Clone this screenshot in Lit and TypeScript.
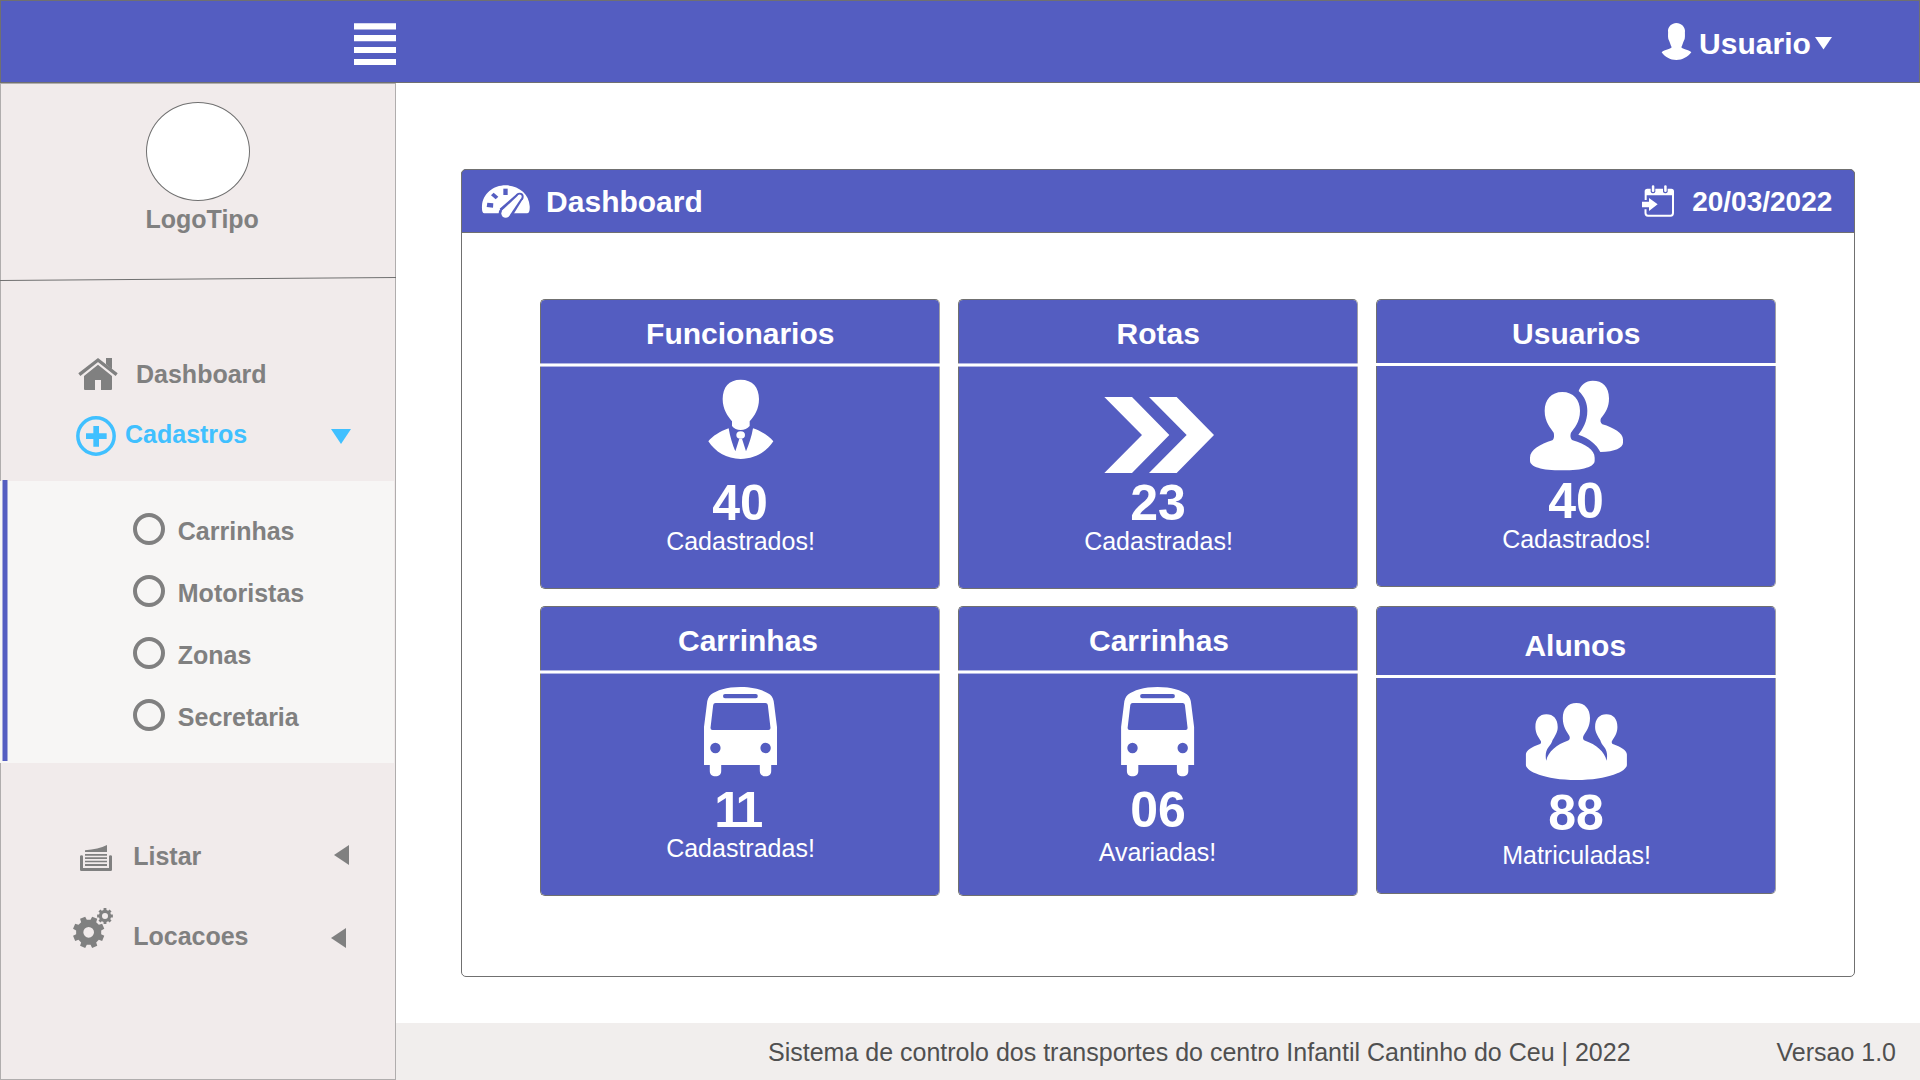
import { LitElement, html, css, svg, type TemplateResult, type SVGTemplateResult } from "lit";
import { customElement, property } from "lit/decorators.js";

/** Outline of a toothed wheel; `phase` is the angle of the first tooth in degrees. */
function gearPath(cx: number, cy: number, outer: number, root: number, hole: number, phase: number): string {
  const teeth = 8;
  const pt = (r: number, deg: number) => {
    const a = (deg * Math.PI) / 180;
    return `${(cx + r * Math.cos(a)).toFixed(2)} ${(cy + r * Math.sin(a)).toFixed(2)}`;
  };
  const parts: string[] = [];
  for (let i = 0; i < teeth; i++) {
    const a = phase + (i * 360) / teeth;
    parts.push(pt(root, a - 14), pt(outer, a - 10), pt(outer, a + 10), pt(root, a + 14));
  }
  return (
    `M${parts.join("L")}Z` +
    `M${cx - hole} ${cy}a${hole} ${hole} 0 1 0 ${hole * 2} 0a${hole} ${hole} 0 1 0 ${-hole * 2} 0Z`
  );
}

const userIcon = html`<svg class="i-user" viewBox="123 66 93 117">
  <path d="M169 69C184 70 194 79 195 92C194 99 196 108 194 117C190 124 188 134 184 142C188 148 205 148 214 157C203 171 188 180 169 180C150 180 135 171 125 157C134 148 151 148 155 142C151 134 149 124 145 117C143 108 145 99 144 92C145 79 155 70 169 69Z"/>
</svg>`;

const homeIcon = html`<svg class="i-home" viewBox="231 81 126 102">
  <path d="M318 84H336V118L318 103Z"/>
  <path d="M238 134L294 90L350 134" fill="none" stroke="currentColor" stroke-width="10"/>
  <path d="M294 104L336 138V177Q336 180 333 180H303V150H285V180H255Q252 180 252 177V138Z"/>
</svg>`;

const plusIcon = html`<svg class="i-plus" viewBox="228 258 120 120">
  <circle cx="288" cy="318" r="54.5" fill="none" stroke="currentColor" stroke-width="10.5"/>
  <path d="M280 288H297V310H320V327H297V350H280V327H258V310H280Z"/>
</svg>`;

const listIcon = html`<svg class="i-list" viewBox="237 132 102 84">
  <path d="M255 151Q295 148 321 135V156H255Z"/>
  <path d="M255 162H321V167H255ZM255 172H321V177H255ZM255 182H321V187H255ZM255 192H321V198H255Z"/>
  <path d="M240 169Q240 166 245 166Q249 166 249 169V204H327V169Q327 166 331 166Q336 166 336 169V209Q336 213 332 213H244Q240 213 240 209Z"/>
</svg>`;

const gearsIcon = html`<svg class="i-gears" viewBox="216 321 126 126">
  <path fill-rule="evenodd" d=${gearPath(266, 397, 48, 38, 16, 22.5)}/>
  <path fill-rule="evenodd" d=${gearPath(315, 348, 24, 18.5, 9, 0)}/>
</svg>`;

const gaugeIcon = html`<svg class="i-gauge" viewBox="93 102 150 105">
  <path d="M103 190C98 190 95 182 96 168C98 131 130 106 167 106C205 106 237 131 239 168C240 182 237 190 231 190Z"/>
  <g class="cut">
    <path d="M160 116H173V135H160Z"/>
    <path d="M123 136L131 128L145 140L137 148Z"/>
    <path d="M112 158L130 160L129 173L110 171Z"/>
    <path d="M199.8 132.300L218.2 147.700L184 203.5L149 176Z"/>
    <circle cx="209" cy="140" r="12"/><circle cx="167" cy="190" r="21"/>
  </g>
  <path d="M204 136.500L213.800 144.100L178 197L156 181.500Z"/>
  <circle cx="209" cy="140" r="6.200"/><circle cx="167" cy="190" r="13"/>
</svg>`;

const calendarIcon = html`<svg class="i-cal" viewBox="123 102 102 102">
  <path d="M134 150V124Q134 116 142 116H214Q222 116 222 124V136H140V150Z"/>
  <path d="M136.500 178V189Q136.500 197 144 197H212Q219 197 219 189V128" fill="none" stroke="currentColor" stroke-width="6"/>
  <g class="cut"><rect x="152" y="104" width="14" height="26" rx="6"/><rect x="189" y="104" width="14" height="26" rx="6"/></g>
  <rect x="155.500" y="106" width="7.500" height="20" rx="3.500"/><rect x="192.500" y="106" width="7.500" height="20" rx="3.500"/>
  <path d="M126 155H147V144L173 163L147 183V172H126Z"/>
</svg>`;

const triDown = html`<svg class="tri-down" viewBox="0 0 20 15" preserveAspectRatio="none"><path d="M0 0H20L10 15Z"/></svg>`;
const triLeft = html`<svg class="tri-left" viewBox="0 0 15 20" preserveAspectRatio="none"><path d="M15 0V20L0 10Z"/></svg>`;

const busShape = svg`<path fill-rule="evenodd" d="M0 0C14 0 24 3.500 29.500 7.500C32 9.500 33.300 13 33.600 17L36.500 40V78H30.700V84C30.700 87.500 28.500 89.300 25 89.300C21.500 89.300 19.300 87.500 19.300 84V78H-19.300V84C-19.300 87.500 -21.500 89.300 -25 89.300C-28.500 89.300 -30.700 87.500 -30.700 84V78H-36.500V40L-33.600 17C-33.300 13 -32 9.500 -29.500 7.500C-24 3.500 -14 0 0 0ZM-15.500 7Q-17.500 7 -17.500 9Q-17.500 11.200 -15.500 11.200H15.300Q17.300 11.200 17.300 9Q17.300 7 15.300 7ZM-25 16Q-27 16 -27.300 18L-30 41Q-30 43 -28 43H28Q30 43 30 41L27.300 18Q27 16 25 16ZM-30.300 61a5.200 5.200 0 1 0 10.400 0a5.200 5.200 0 1 0 -10.400 0ZM19.900 61a5.200 5.200 0 1 0 10.400 0a5.200 5.200 0 1 0 -10.400 0Z"/>`;

interface Stat {
  kind: string;
  title: string;
  value: string;
  label: string;
  viewBox: string;
  art: SVGTemplateResult;
}

const stats: Stat[] = [
  {
    kind: "staff", title: "Funcionarios", value: "40", label: "Cadastrados!", viewBox: "450 231 360 333",
    art: svg`<path d="M632 269C668 269 687 292 687 327C687 358 673 378 659 394V408C652 416 643 420 632 420C621 420 612 416 606 408V394C593 378 578 358 578 327C578 292 596 269 632 269Z"/>
      <path d="M596 415C570 424 548 438 535 454C555 485 590 507 632 507C675 507 710 485 730 454C717 438 695 424 669 415C665 440 656 465 648 484L636 446H628L616 484C608 465 600 440 596 415Z"/>
      <ellipse cx="632" cy="435" rx="13" ry="11.500"/>`,
  },
  {
    kind: "routes", title: "Rotas", value: "23", label: "Cadastradas!", viewBox: "444 231 360 333",
    art: svg`<path d="M463 321H546L658 435L546 549H463L576 435ZM597 321H680L792 435L680 549H597L710 435Z"/>`,
  },
  {
    kind: "users", title: "Usuarios", value: "40", label: "Cadastrados!", viewBox: "468 228 360 330",
    art: svg`<path d="M607 306C640 306 660 330 660 362C660 398 642 414 633 428C630 436 631 447 638 451C677 463 704 480 704 503V512C704 530 670 541 607 541C544 541 510 530 510 512V503C510 480 540 463 577 451C583 447 583 436 581 428C573 414 554 398 554 362C554 330 574 306 607 306Z"/>
      <path d="M656 303C675 322 682 340 682 362C682 395 668 417 655 434C690 446 710 464 721 486C765 485 789 473 789 458V448C789 430 762 413 727 403C721 399 720 391 723 385C738 366 747 352 747 325C747 290 728 272 698 272C677 272 662 285 656 303Z"/>`,
  },
  {
    kind: "vans", title: "Carrinhas", value: "11", label: "Cadastradas!", viewBox: "-60.5 -13 120 111", art: busShape,
  },
  {
    kind: "broken", title: "Carrinhas", value: "06", label: "Avariadas!", viewBox: "-59.600 -13 120 111", art: busShape,
  },
  {
    kind: "pupils", title: "Alunos", value: "88", label: "Matriculadas!", viewBox: "-60.400 -25 120 110",
    art: svg`<path d="M0 0C8.500 0 13.600 6 13.600 15C13.600 24 9.500 28.500 7 33C6.200 35 6.800 37 8.200 37.500C20 41.500 28 48.500 30.200 57.700C31.200 53 30.800 47.500 27.800 44C25.800 41.500 24.700 40 23.800 37C20 31 18.700 28 18.700 24C18.700 16 23 11.300 30 11.300C37 11.300 41 16 41 24C41 30.500 38 34 35.600 38C35 39.500 35.500 41 37 41.300C44 43.500 50.500 47.500 50.500 51.500V62C50.500 68 32 77 0 77C-32 77 -50.500 68 -50.500 62V51.500C-50.500 47.500 -44 43.500 -37 41.300C-35.500 41 -35 39.500 -35.600 38C-38 34 -41 30.500 -41 24C-41 16 -37 11.300 -30 11.300C-23 11.300 -18.700 16 -18.700 24C-18.700 28 -20 31 -23.800 37C-24.700 40 -25.800 41.500 -27.800 44C-30.800 47.500 -31.200 53 -30.200 57.700C-28 48.500 -20 41.500 -8.200 37.500C-6.800 37 -6.200 35 -7 33C-9.500 28.500 -13.600 24 -13.600 15C-13.600 6 -8.500 0 0 0Z"/>`,
  },
];

const entries = ["Carrinhas", "Motoristas", "Zonas", "Secretaria"];

@customElement("stat-card")
class StatCard extends LitElement {
  @property({ attribute: false }) stat!: Stat;

  static styles = css`
    :host { display: block; }
    .card {
      box-sizing: border-box; width: 400px; height: 290px; border: 1px solid #707070; border-radius: 5px;
      border-right-color: #a0a0a6;
      background: #545dc1; background-clip: padding-box; color: #fff; display: flex; flex-direction: column;
      align-items: center; white-space: nowrap;
    }
    .title {
      height: 63px; padding: 17px 0 0 0.500px; box-sizing: border-box; font-size: 30px; line-height: 33px; font-weight: 700;
    }
    .rule {
      align-self: stretch; flex: none; height: 4px; margin: 0 -1px;
      background: linear-gradient(rgba(255,255,255,.55) 0 1px, #fff 1px 3px, rgba(255,255,255,.55) 3px);
    }
    .glyph { display: block; flex: none; width: 120px; height: 111px; fill: #fff; }
    .value { font-size: 50px; line-height: 50px; font-weight: 700; }
    .label { margin-top: 1px; padding-left: 1px; font-size: 25px; line-height: 24px; }
    .users, .pupils { height: 288px; }
    .users .rule, .pupils .rule { height: 3px; background: #fff; }
    .users .glyph, .pupils .glyph { height: 110px; }
    .vans .title { padding-left: 16px; }
    .vans .value { letter-spacing: -3.700px; padding-right: 6px; }
    .broken .title { padding-left: 2px; }
    .broken .label { margin-top: 5px; padding: 0 1px 0 0; }
    .pupils .title { height: 68px; padding: 22px 1.500px 0 0; }
    .pupils .label { margin-top: 5px; }
  `;

  render(): TemplateResult {
    const s = this.stat;
    return html`<div class="card ${s.kind}">
      <div class="title">${s.title}</div>
      <div class="rule"></div>
      <svg class="glyph" viewBox=${s.viewBox}>${s.art}</svg>
      <div class="value">${s.value}</div>
      <div class="label">${s.label}</div>
    </div>`;
  }
}

@customElement("app-root")
class AppRoot extends LitElement {
  static styles = css`
    :host {
      display: block; width: 1920px; height: 1080px; overflow: hidden; background: #fff;
      font-family: "Liberation Sans", Arial, sans-serif; white-space: nowrap;
    }
    * { box-sizing: border-box; }
    svg { display: block; flex: none; fill: currentColor; }
    .topbar {
      height: 83px; border: 1px solid #707070; background: #545dc1; color: #fff;
      display: flex; justify-content: space-between; align-items: flex-start; padding: 0 87px 0 353px;
    }
    .burger { width: 42px; height: 44px; margin-top: 21px; }
    .user { display: flex; align-items: flex-start; margin-top: 21px; font-size: 30px; line-height: 33px; font-weight: 700; }
    .i-user { width: 31px; height: 39px; }
    .user-name { margin: 5px 4.200px 0 7px; }
    .user .tri-down { width: 17px; height: 12.500px; margin-top: 15px; }
    .body { display: flex; height: 997px; }

    .sidebar {
      width: 396px; flex: none; background: #f1ebeb; border: 1px solid #b0adad; color: #808080;
      font-size: 25px; line-height: 28px; font-weight: 700;
    }
    .brand { height: 193px; padding: 18px 0 0 145px; }
    .logo { width: 104px; height: 99px; border: 1px solid #707070; border-radius: 50%; background: #fff; }
    .brand-name { margin: 4px 0 0 -0.500px; }
    .divider { width: 396px; height: 6px; margin-left: -1px; }
    .row { display: flex; align-items: flex-start; }
    .row-dash { margin-top: 74px; padding-left: 76px; }
    .i-home { width: 42px; height: 34px; }
    .row-dash span { margin: 3px 0 0 17px; }
    .row-cad { margin-top: 25px; padding: 0 44px 0 75px; color: #40c0ff; }
    .i-plus { width: 40px; height: 40px; }
    .row-cad span { margin: 4px auto 0 9px; }
    .row-cad .tri-down { width: 20px; height: 15px; margin-top: 13px; }
    .submenu { display: flex; width: 394px; height: 282px; margin: 25px 0 0 -1px; padding-left: 2px; background: #f7f6f5; }
    .marker {
      width: 6px; height: 281px; margin-top: -1px;
      background: linear-gradient(90deg, #a5a9db 0 1px, #545dc1 1px 5px, #a5a9db 5px);
    }
    .entries { padding: 17px 0 0 125px; }
    .entry { display: flex; align-items: center; height: 62px; }
    .ring { width: 32px; height: 32px; border: 4px solid #808080; border-radius: 50%; }
    .entry span { margin: 4px 0 0 12.800px; }
    .tri-left { width: 15px; height: 20px; }
    .row-list { margin-top: 79px; padding: 0 46px 0 78px; }
    .i-list { width: 34px; height: 28px; margin-top: 2px; }
    .row-list span { margin: 0 auto 0 20.200px; }
    .row-list .tri-left { margin-top: 3px; }
    .row-loc { margin-top: 35px; padding: 0 49px 0 71px; }
    .i-gears { width: 42px; height: 42px; }
    .row-loc span { margin: 15px auto 0 19.200px; }
    .row-loc .tri-left { margin-top: 21px; }

    .main { flex: 1; display: flex; flex-direction: column; justify-content: space-between; }
    .panel { width: 1394px; height: 808px; margin: 86px 0 0 65px; border: 1px solid #707070; border-radius: 5px; }
    .panel-head {
      height: 64px; margin: -1px -1px 0; padding: 0 21.700px 0 19px; border: 1px solid #707070;
      border-radius: 5px 5px 0 0; background: #545dc1; color: #fff; display: flex; align-items: flex-start; font-weight: 700;
    }
    .i-gauge { width: 50px; height: 35px; margin-top: 14px; }
    .cut { fill: #545dc1; }
    .panel-title { margin: 15px auto 0 15.100px; font-size: 30px; line-height: 33px; }
    .i-cal { width: 34px; height: 34px; margin-top: 14px; }
    .date { margin: 16px 0 0 17px; font-size: 28px; line-height: 31px; }
    .cards { display: grid; grid-template-columns: repeat(3, 400px); gap: 17px 18px; padding: 66px 0 0 78px; }
    .footer {
      height: 57px; padding: 15px 24px 0 372px; background: #f1eeed; color: #505050;
      display: flex; justify-content: space-between; font-size: 25px; line-height: 28px;
    }
  `;

  render(): TemplateResult {
    return html`
      <header class="topbar">
        <svg class="burger" viewBox="0 0 42 44">
          <path d="M0 1.200H42V7.400H0ZM0 13.100H42V19.200H0ZM0 25H42V31H0ZM0 37H42V43H0Z"/>
        </svg>
        <div class="user">${userIcon}<span class="user-name">Usuario</span>${triDown}</div>
      </header>
      <div class="body">
        <nav class="sidebar">
          <div class="brand"><div class="logo"></div><div class="brand-name">LogoTipo</div></div>
          <svg class="divider" viewBox="0 0 396 6"><line x1="0" y1="3.500" x2="396" y2="0.500" stroke="#707070"/></svg>
          <div class="row row-dash">${homeIcon}<span>Dashboard</span></div>
          <div class="row row-cad">${plusIcon}<span>Cadastros</span>${triDown}</div>
          <div class="submenu">
            <div class="marker"></div>
            <div class="entries">
              ${entries.map((e) => html`<div class="entry"><div class="ring"></div><span>${e}</span></div>`)}
            </div>
          </div>
          <div class="row row-list">${listIcon}<span>Listar</span>${triLeft}</div>
          <div class="row row-loc">${gearsIcon}<span>Locacoes</span>${triLeft}</div>
        </nav>
        <main class="main">
          <section class="panel">
            <div class="panel-head">
              ${gaugeIcon}<span class="panel-title">Dashboard</span>
              ${calendarIcon}<span class="date">20/03/2022</span>
            </div>
            <div class="cards">${stats.map((s) => html`<stat-card .stat=${s}></stat-card>`)}</div>
          </section>
          <footer class="footer">
            <span>Sistema de controlo dos transportes do centro Infantil Cantinho do Ceu | 2022</span>
            <span>Versao 1.0</span>
          </footer>
        </main>
      </div>
    `;
  }
}
